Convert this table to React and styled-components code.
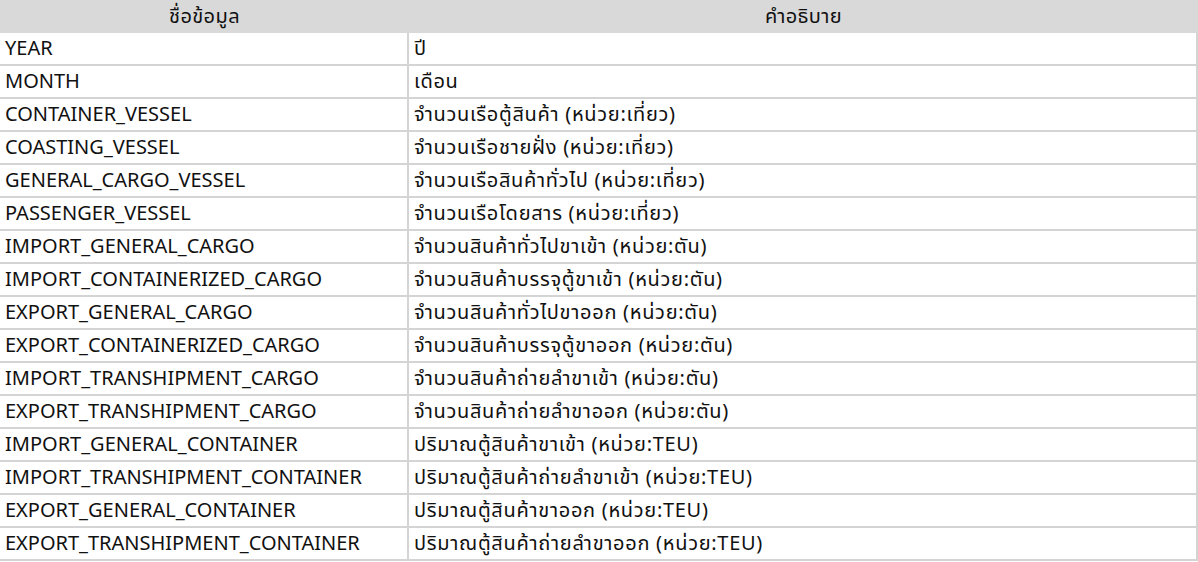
import { Fragment } from "react";
import styled, { createGlobalStyle } from "styled-components";

const GlobalStyle = createGlobalStyle`
  html, body {
    margin: 0;
    padding: 0;
    background: #fff;
  }
  body {
    font-family: "Noto Sans Thai", "Noto Sans", "Liberation Sans", sans-serif;
    color: #111;
  }
`;

const Table = styled.div`
  width: 1198px;
  display: grid;
  grid-template-columns: 409px 789px;
`;

const HeadCell = styled.div`
  height: 33px;
  background: #d9d9d9;
  display: flex;
  align-items: center;
  justify-content: center;
  font-size: 20px;
  letter-spacing: 0.4px;
`;

const Cell = styled.div`
  box-sizing: border-box;
  height: 33px;
  display: flex;
  align-items: center;
  padding-left: 5px;
  border-bottom: 2px solid #d4d4d4;
  border-right: 2px solid #d4d4d4;
  font-size: 20px;
  letter-spacing: ${(p) => (p.$desc ? "0.7px" : "0")};
  white-space: nowrap;
`;

const rows = [
  ["YEAR", "ปี"],
  ["MONTH", "เดือน"],
  ["CONTAINER_VESSEL", "จำนวนเรือตู้สินค้า (หน่วย:เที่ยว)"],
  ["COASTING_VESSEL", "จำนวนเรือชายฝั่ง (หน่วย:เที่ยว)"],
  ["GENERAL_CARGO_VESSEL", "จำนวนเรือสินค้าทั่วไป (หน่วย:เที่ยว)"],
  ["PASSENGER_VESSEL", "จำนวนเรือโดยสาร (หน่วย:เที่ยว)"],
  ["IMPORT_GENERAL_CARGO", "จำนวนสินค้าทั่วไปขาเข้า (หน่วย:ตัน)"],
  ["IMPORT_CONTAINERIZED_CARGO", "จำนวนสินค้าบรรจุตู้ขาเข้า (หน่วย:ตัน)"],
  ["EXPORT_GENERAL_CARGO", "จำนวนสินค้าทั่วไปขาออก (หน่วย:ตัน)"],
  ["EXPORT_CONTAINERIZED_CARGO", "จำนวนสินค้าบรรจุตู้ขาออก (หน่วย:ตัน)"],
  ["IMPORT_TRANSHIPMENT_CARGO", "จำนวนสินค้าถ่ายลำขาเข้า (หน่วย:ตัน)"],
  ["EXPORT_TRANSHIPMENT_CARGO", "จำนวนสินค้าถ่ายลำขาออก (หน่วย:ตัน)"],
  ["IMPORT_GENERAL_CONTAINER", "ปริมาณตู้สินค้าขาเข้า (หน่วย:TEU)"],
  ["IMPORT_TRANSHIPMENT_CONTAINER", "ปริมาณตู้สินค้าถ่ายลำขาเข้า (หน่วย:TEU)"],
  ["EXPORT_GENERAL_CONTAINER", "ปริมาณตู้สินค้าขาออก (หน่วย:TEU)"],
  ["EXPORT_TRANSHIPMENT_CONTAINER", "ปริมาณตู้สินค้าถ่ายลำขาออก (หน่วย:TEU)"],
];

export default function App() {
  return (
    <>
      <GlobalStyle />
      <Table>
        <HeadCell>ชื่อข้อมูล</HeadCell>
        <HeadCell>คำอธิบาย</HeadCell>
        {rows.map(([name, desc]) => (
          <Fragment key={name}>
            <Cell>{name}</Cell>
            <Cell $desc>{desc}</Cell>
          </Fragment>
        ))}
      </Table>
    </>
  );
}
